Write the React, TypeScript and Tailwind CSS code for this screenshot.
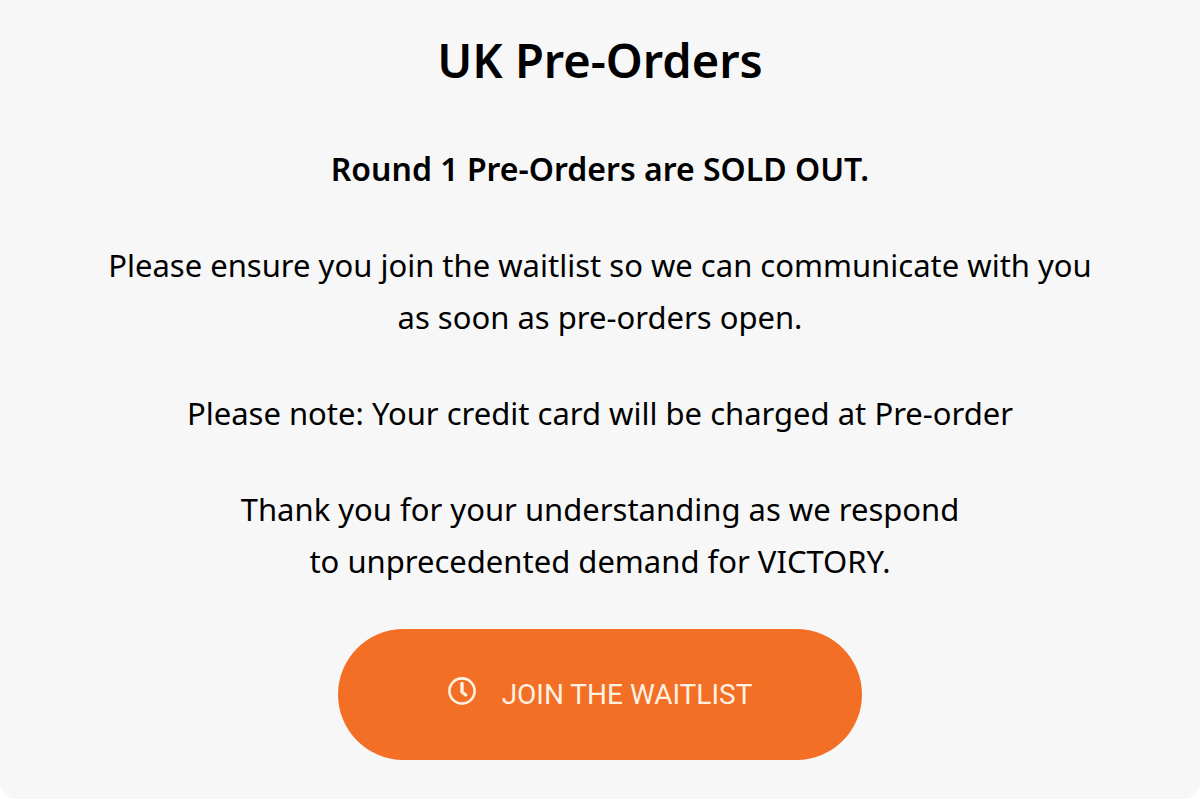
const paragraphs = [
  {
    id: "waitlist",
    lines: ["Please ensure you join the waitlist so we can communicate with you", "as soon as pre-orders open."],
  },
  {
    id: "charge",
    lines: ["Please note: Your credit card will be charged at Pre-order"],
  },
  {
    id: "thanks",
    lines: ["Thank you for your understanding as we respond", "to unprecedented demand for VICTORY."],
  },
];

function ClockIcon() {
  return (
    <svg viewBox="0 0 28 28" className="w-7 h-7 shrink-0" fill="none" stroke="currentColor" aria-hidden="true">
      <circle cx="14" cy="14" r="12.6" strokeWidth="2.6" />
      <path d="M14 6.4V15L17.8 18" strokeWidth="3.4" strokeLinecap="round" strokeLinejoin="round" />
    </svg>
  );
}

export default function App() {
  return (
    <main className="bg-white">
      <section className="bg-[#f7f7f7] rounded-b-2xl px-6 pt-8 pb-[39px] text-center text-black font-['Noto_Sans',sans-serif]">
        <h1 className="text-[47px] leading-[56px] font-semibold">UK Pre-Orders</h1>

        <div className="mt-[55px] space-y-11 text-[31px] leading-[52px]">
          <p className="text-[32px] leading-[52px] font-semibold">Round 1 Pre-Orders are SOLD OUT.</p>
          {paragraphs.map((paragraph) => (
            <p key={paragraph.id}>
              {paragraph.lines.map((line) => (
                <span key={line} className="block">{line}</span>
              ))}
            </p>
          ))}
        </div>

        <button
          type="button"
          className="mt-[42px] inline-flex items-center justify-center gap-[26px] px-[110px] h-[131px] rounded-full bg-[#f36f25] text-[#fff1e2] font-['Roboto',sans-serif] text-[28px] leading-8 cursor-pointer"
        >
          <span className="pb-2">
            <ClockIcon />
          </span>
          JOIN THE WAITLIST
        </button>
      </section>
    </main>
  );
}
